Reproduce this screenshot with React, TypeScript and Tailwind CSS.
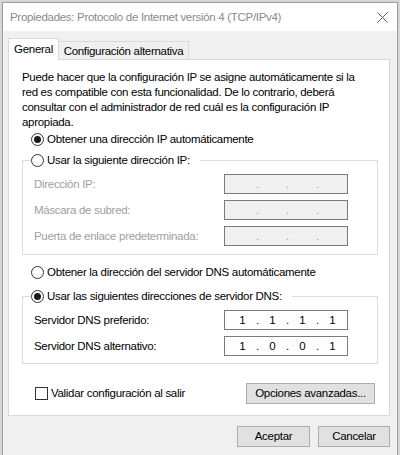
import React from "react";

function Radio({ checked }: { checked?: boolean }) {
  return (
    <span className="flex h-[13px] w-[13px] shrink-0 items-center justify-center rounded-full border border-[#333333] bg-white">
      {checked && <span className="h-[7px] w-[7px] rounded-full bg-[#1a1a1a]" />}
    </span>
  );
}

function IpBox({ value, disabled }: { value?: string[]; disabled?: boolean }) {
  const parts = value ?? ["", "", "", ""];
  return (
    <div
      className={
        "flex h-[20px] w-[124px] items-center border pl-[5px] tracking-normal " +
        (disabled ? "border-[#7a7a7a] bg-[#f0f0f0] text-[#9a9a9a]" : "border-[#7a7a7a] bg-white text-black")
      }
    >
      {parts.map((p, i) => (
        <React.Fragment key={i}>
          <span className="w-[25px] text-center">{p}</span>
          {i < 3 && <span className="w-[5px] text-center">.</span>}
        </React.Fragment>
      ))}
    </div>
  );
}

function Row({ label, value, disabled }: { label: string; value?: string[]; disabled?: boolean }) {
  return (
    <div className="flex h-[20px] items-center pl-[3px]">
      <span className={"w-[190px] " + (disabled ? "text-[#a0a0a0]" : "text-black")}>{label}</span>
      <IpBox value={value} disabled={disabled} />
    </div>
  );
}

export default function App() {
  return (
    <div
      className="h-[455px] w-[400px] overflow-hidden bg-[#d6d6d6] px-[2px] pt-[2px] text-[11.5px] leading-[15px] tracking-[-0.3px] text-black"
      style={{ fontFamily: '"Liberation Sans", Arial, sans-serif' }}
    >
      <div className="flex h-[453px] flex-col border border-b-0 border-[#9c9c9c] bg-[#f0f0f0]">
        {/* title bar */}
        <div className="flex h-[28px] shrink-0 items-center justify-between bg-white pl-[7px] pr-[7px]">
          <span className="text-[#8a8a8a]">Propiedades: Protocolo de Internet versión 4 (TCP/IPv4)</span>
          <svg width="11" height="11" viewBox="0 0 11 11" className="mr-[2px]">
            <path d="M0.5 0.5 L10.5 10.5 M10.5 0.5 L0.5 10.5" stroke="#5a5a5a" strokeWidth="1" />
          </svg>
        </div>

        <div className="flex flex-1 flex-col pl-[5px] pr-[7px] pt-[7px]">
          {/* tabs */}
          <div className="flex h-[21px] items-end">
            <div className="relative z-10 -mb-px flex h-[22px] w-[51px] items-center justify-center border border-b-0 border-[#d9d9d9] bg-white">
              General
            </div>
            <div className="flex h-[18px] w-[130px] items-center justify-center whitespace-nowrap border border-b-0 border-l-0 border-[#d9d9d9] bg-[#f0f0f0] pt-[1px]">
              Configuración alternativa
            </div>
          </div>

          {/* panel */}
          <div className="flex h-[357px] flex-col border border-[#d9d9d9] bg-white pt-[10px]">
            <p className="whitespace-nowrap pl-[13px]">
              Puede hacer que la configuración IP se asigne automáticamente si la
              <br />
              red es compatible con esta funcionalidad. De lo contrario, deberá
              <br />
              consultar con el administrador de red cuál es la configuración IP
              <br />
              apropiada.
            </p>

            <div className="flex h-[18px] items-center gap-[3px] pl-[22px]">
              <Radio checked />
              <span>Obtener una dirección IP automáticamente</span>
            </div>

            <fieldset className="ml-[13px] mr-[11px] mt-[4px] border border-[#dcdcdc] px-[8px] pb-[8px] pt-[6px]">
              <legend className="flex h-[16px] items-center gap-[3px] pr-[10px]">
                <Radio />
                <span>Usar la siguiente dirección IP:</span>
              </legend>
              <div className="flex flex-col gap-[6px]">
                <Row label="Dirección IP:" disabled />
                <Row label="Máscara de subred:" disabled />
                <Row label="Puerta de enlace predeterminada:" disabled />
              </div>
            </fieldset>

            <div className="mt-[8px] flex h-[18px] items-center gap-[3px] pl-[22px]">
              <Radio />
              <span>Obtener la dirección del servidor DNS automáticamente</span>
            </div>

            <fieldset className="ml-[13px] mr-[11px] mt-[7px] border border-[#dcdcdc] px-[8px] pb-[7px] pt-[6px]">
              <legend className="flex h-[16px] items-center gap-[3px] pr-[10px]">
                <Radio checked />
                <span>Usar las siguientes direcciones de servidor DNS:</span>
              </legend>
              <div className="flex flex-col gap-[6px]">
                <Row label="Servidor DNS preferido:" value={["1", "1", "1", "1"]} />
                <Row label="Servidor DNS alternativo:" value={["1", "0", "0", "1"]} />
              </div>
            </fieldset>

            <div className="mt-[19px] flex h-[21px] items-center justify-between pl-[26px] pr-[14px]">
              <div className="flex items-center gap-[3px]">
                <span className="h-[13px] w-[13px] border border-[#333333] bg-white" />
                <span>Validar configuración al salir</span>
              </div>
              <button className="flex h-[21px] w-[129px] items-center justify-center border border-[#adadad] bg-[#e1e1e1]">
                Opciones avanzadas...
              </button>
            </div>
          </div>

          {/* bottom buttons */}
          <div className="mt-[10px] flex justify-end gap-[8px]">
            <button className="flex h-[21px] w-[73px] items-center justify-center border border-[#adadad] bg-[#e1e1e1]">
              Aceptar
            </button>
            <button className="flex h-[21px] w-[72px] items-center justify-center border border-[#adadad] bg-[#e1e1e1]">
              Cancelar
            </button>
          </div>
        </div>
      </div>
    </div>
  );
}
